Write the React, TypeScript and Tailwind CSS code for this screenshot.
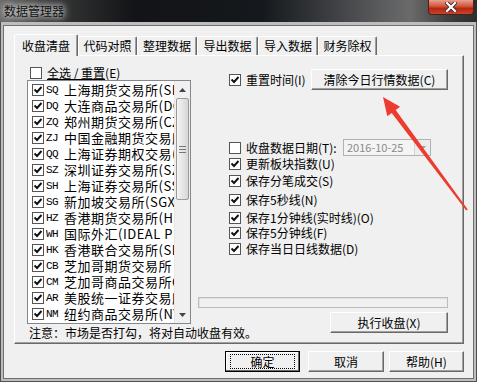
import clsx from "clsx";

const exchanges: [string, string][] = [
  ["SQ", "上海期货交易所(SHFE)"],
  ["DQ", "大连商品交易所(DCE)"],
  ["ZQ", "郑州期货交易所(CZCE)"],
  ["ZJ", "中国金融期货交易所"],
  ["QQ", "上海证券期权交易(SHOP)"],
  ["SZ", "深圳证券交易所(SZSE)"],
  ["SH", "上海证券交易所(SSE)"],
  ["SG", "新加坡交易所(SGX)"],
  ["HZ", "香港期货交易所(HKFE)"],
  ["WH", "国际外汇(IDEAL PRO)"],
  ["HK", "香港联合交易所(SEHK)"],
  ["CB", "芝加哥期货交易所 (CBOT)"],
  ["CM", "芝加哥商品交易所CME"],
  ["AR", "美股统一证券交易所"],
  ["NM", "纽约商品交易所(NYMEX)"],
];

const tabs = [
  { label: "代码对照", w: "w-[59px]" },
  { label: "整理数据", w: "w-[60px]" },
  { label: "导出数据", w: "w-[61px]" },
  { label: "导入数据", w: "w-[60px]" },
  { label: "财务除权", w: "w-[59px]" },
];

// uneven row spacing, as in the original dialog
const options = [
  { label: "更新板块指数(U)", mt: "mt-0" },
  { label: "保存分笔成交(S)", mt: "mt-[1px]" },
  { label: "保存5秒线(N)", mt: "mt-[3px]" },
  { label: "保存1分钟线(实时线)(O)", mt: "mt-[2px]" },
  { label: "保存5分钟线(F)", mt: "-mt-[1px]" },
  { label: "保存当日日线数据(D)", mt: "mt-0" },
];

function Box({ checked }: { checked?: boolean }) {
  return (
    <span className="flex h-[12px] w-[12px] shrink-0 items-center justify-center border border-[#555] bg-white">
      {checked && (
        <svg width="10" height="10" viewBox="0 0 10 10">
          <path d="M1.5 4.5 L4 7 L8.5 2" fill="none" stroke="#111" strokeWidth="1.9" />
        </svg>
      )}
    </span>
  );
}

function Btn({ children, className }: { children: React.ReactNode; className?: string }) {
  return (
    <div
      className={clsx(
        "flex items-center justify-center border border-t-white border-l-white border-r-[#696969] border-b-[#696969] bg-[#f0f0f0] text-[12px] text-black shadow-[inset_-1px_-1px_0_#a0a0a0]",
        className
      )}
    >
      {children}
    </div>
  );
}

function Scrollbar() {
  return (
    <div className="flex w-[16px] shrink-0 flex-col border-l border-[#e6e6e6] bg-[#f0f0f0]">
      <div className="flex h-[17px] items-center justify-center">
        <svg width="7" height="4" viewBox="0 0 7 4">
          <path d="M0 4 L3.5 0 L7 4Z" fill="#444" />
        </svg>
      </div>
      <div className="mx-[1px] flex h-[102px] items-center justify-center rounded-[2px] border border-[#9a9a9a] bg-[linear-gradient(90deg,#f4f4f4,#e6e6e6_50%,#d6d6d6)]">
        <div className="flex flex-col gap-[2px]">
          <div className="h-px w-[7px] bg-[#777]" />
          <div className="h-px w-[7px] bg-[#777]" />
          <div className="h-px w-[7px] bg-[#777]" />
        </div>
      </div>
      <div className="flex-1" />
      <div className="flex h-[17px] items-center justify-center">
        <svg width="7" height="4" viewBox="0 0 7 4">
          <path d="M0 0 L3.5 4 L7 0Z" fill="#444" />
        </svg>
      </div>
    </div>
  );
}

export default function App() {
  return (
    <div className="relative flex h-[382px] w-[477px] flex-col overflow-hidden bg-[#505050] font-['Noto_Sans_CJK_SC','Liberation_Sans',sans-serif] text-[12px] text-black">
      {/* title bar */}
      <div className="flex h-[22px] shrink-0 bg-[linear-gradient(90deg,#6a6a6a_0%,#3a3a3a_10%,#121417_28%,#15181c_55%,#5a5c5e_80%,#6a6a6a_86%,#3a3a3a_95%,#2e2e2e_100%)]">
        <span className="self-center pl-[4px] text-[12px] leading-none text-[#111] [text-shadow:0_0_6px_#fff,0_0_10px_#ddd]">
          数据管理器
        </span>
        <div className="ml-auto mr-[3px] flex h-[15px] w-[46px] items-center justify-center rounded-b-[4px] border border-t-0 border-[#4a2020] bg-[linear-gradient(180deg,#e9a08e_0%,#d2553c_45%,#b8260f_60%,#c8452a_100%)]">
          <svg width="12" height="10" viewBox="0 0 12 10">
            <path d="M2 1 L10 9 M10 1 L2 9" stroke="#3a2a2a" strokeWidth="4" strokeLinecap="square" />
            <path d="M2 1 L10 9 M10 1 L2 9" stroke="#fff" strokeWidth="2.2" strokeLinecap="square" />
          </svg>
        </div>
      </div>

      {/* frame */}
      <div className="mx-[1px] mb-[1px] flex flex-1 flex-col bg-[#bdbdbd] px-[2px] pb-[2px] pt-[3px]">
        <div className="flex flex-1 flex-col border border-[#707070] bg-[#f0f0f0] pl-[10px] pt-[8px]">
          {/* tabs */}
          <div className="relative z-10 flex h-[21px] items-end">
            <div className="-mb-px flex h-[22px] w-[64px] items-center justify-center rounded-t-[2px] border border-b-0 border-t-white border-l-white border-r-[#696969] bg-[#f0f0f0] shadow-[inset_-1px_0_0_#a0a0a0]">
              收盘清盘
            </div>
            {tabs.map((t) => (
              <div
                key={t.label}
                className={clsx(
                  "flex h-[19px] items-center justify-center rounded-t-[2px] border border-b-0 border-t-white border-l-white border-r-[#696969] bg-[#f0f0f0] shadow-[inset_-1px_0_0_#a0a0a0]",
                  t.w
                )}
              >
                {t.label}
              </div>
            ))}
          </div>

          {/* panel */}
          <div className="flex h-[289px] w-[450px] border border-t-white border-l-white border-r-[#696969] border-b-[#696969] bg-[#f0f0f0] shadow-[inset_-1px_-1px_0_#a0a0a0]">
            {/* left column */}
            <div className="ml-[12px] flex w-[164px] flex-col">
              <div className="mt-[10px] flex h-[14px] items-center gap-[5px] pl-[3px]">
                <Box />
                <span>
                  <span className="underline">全选 / 重置</span>(E)
                </span>
              </div>
              <div className="flex h-[244px] border border-[#828790] bg-white">
                <div className="flex min-w-0 flex-1 flex-col overflow-hidden pl-[4px] pt-px">
                  {exchanges.map(([code, name]) => (
                    <div key={code} className="flex h-[16px] shrink-0 items-center overflow-hidden whitespace-nowrap">
                      <Box checked />
                      <span className="ml-[2px] w-[18px] shrink-0 font-['Liberation_Mono',monospace] text-[11px] tracking-[-0.6px]">
                        {code}
                      </span>
                      <span className="min-w-0 overflow-hidden text-[13px] tracking-[0.5px]">{name}</span>
                    </div>
                  ))}
                </div>
                <Scrollbar />
              </div>
              <div className="flex h-[18px] items-center whitespace-nowrap pl-[2px]">
                注意：市场是否打勾，将对自动收盘有效。
              </div>
            </div>

            {/* right column */}
            <div className="ml-[7px] flex w-[250px] flex-col">
              <div className="mt-[13px] flex h-[21px] items-center pl-[31px]">
                <Box checked />
                <span className="ml-[5px]">重置时间(I)</span>
                <Btn className="ml-auto h-[21px] w-[137px]">清除今日行情数据(C)</Btn>
              </div>

              <div className="mt-[49px] flex h-[17px] items-center pl-[31px]">
                <Box />
                <span className="ml-[5px] w-[97px] whitespace-nowrap">收盘数据日期(T):</span>
                <div className="flex h-[17px] w-[88px] items-center border border-[#adb2b5] bg-[#f4f4f4]">
                  <span className="flex-1 pl-[3px] text-[11px] text-[#8a8a8a]">2016-10-25</span>
                  <div className="flex h-full w-[16px] items-center justify-center border-l border-[#d5d5d5] bg-[#ececec]">
                    <svg width="7" height="4" viewBox="0 0 7 4">
                      <path d="M0 0 L3.5 4 L7 0Z" fill="#a0a0a0" />
                    </svg>
                  </div>
                </div>
              </div>

              {options.map((o) => (
                <div key={o.label} className={clsx("flex h-[16px] items-center pl-[31px]", o.mt)}>
                  <Box checked />
                  <span className="ml-[5px] whitespace-nowrap">{o.label}</span>
                </div>
              ))}

              <div className="mt-[40px] h-[11px] w-[250px] border border-[#bcbcbc] bg-[#f0f0f0] shadow-[inset_1px_1px_0_#e0e0e0]" />
              <Btn className="mt-[4px] h-[21px] w-[118px] self-end">执行收盘(X)</Btn>
            </div>
          </div>

          {/* dialog buttons */}
          <div className="mt-[7px] flex w-[450px] justify-end">
            <div className="flex h-[21px] w-[75px] items-center justify-center border border-black bg-[#f0f0f0] shadow-[inset_-1px_-1px_0_#696969,inset_1px_1px_0_#fff]">
              <div className="flex h-[15px] w-[65px] items-center justify-center border border-dotted border-black">
                确定
              </div>
            </div>
            <Btn className="ml-[8px] h-[21px] w-[76px]">取消</Btn>
            <Btn className="ml-[5px] h-[21px] w-[75px]">帮助(H)</Btn>
          </div>
        </div>
      </div>

      {/* red annotation arrow */}
      <svg className="pointer-events-none absolute inset-0" width="477" height="382" viewBox="0 0 477 382">
        <polygon
          points="383,97 400.1,106.8 395.7,110 467.8,209.4 466.2,210.6 391.7,113 387.3,116.2"
          fill="#ee3b30"
        />
      </svg>
    </div>
  );
}
